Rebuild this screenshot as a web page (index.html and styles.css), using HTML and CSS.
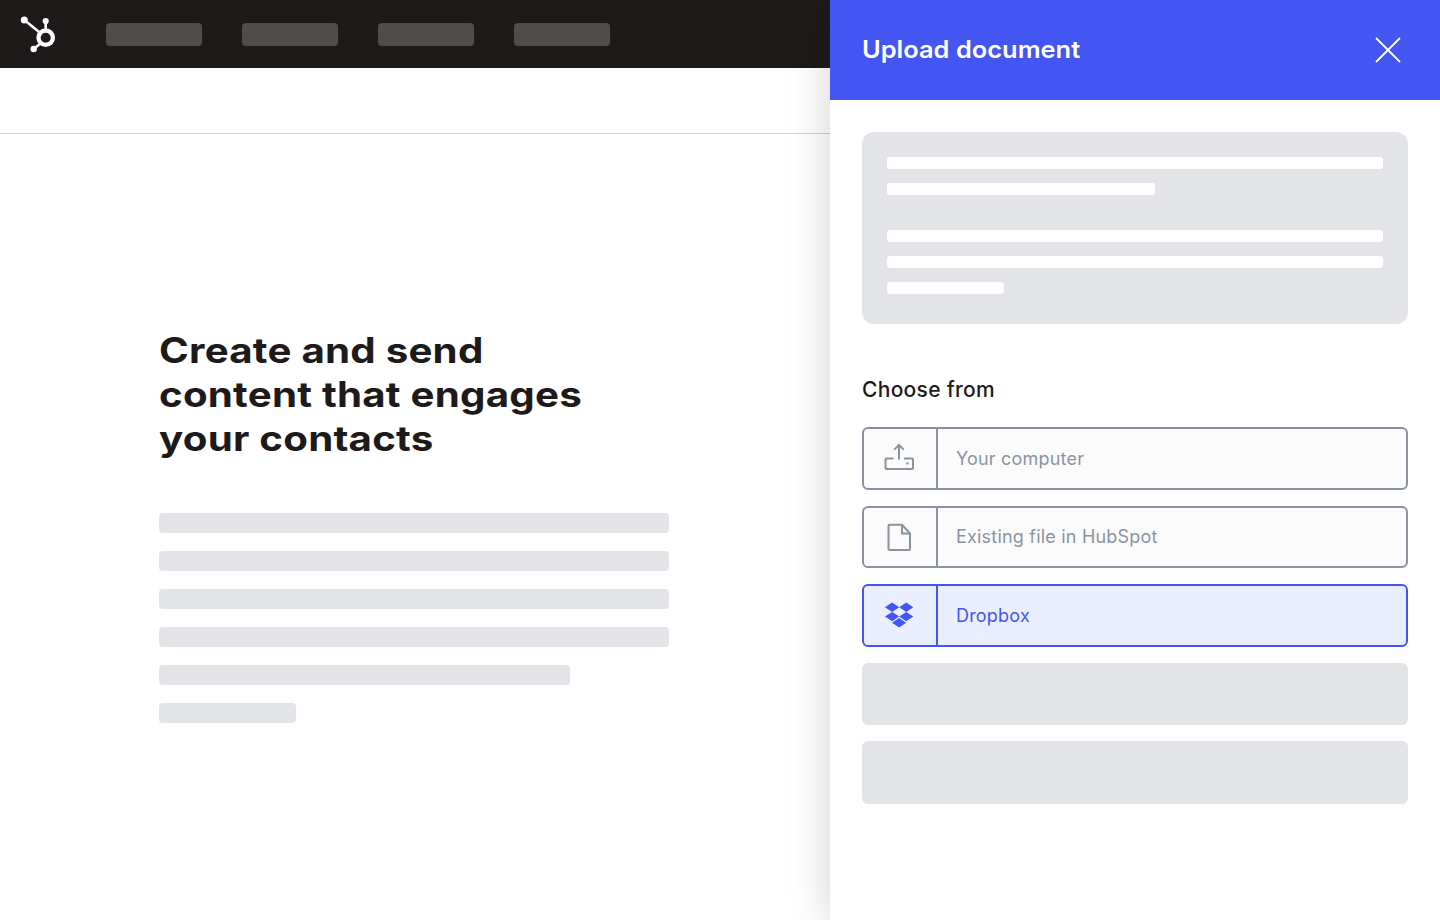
FILE: index.html
```html
<!DOCTYPE html>
<html lang="en">
<head>
    <meta charset="UTF-8">
    <meta name="viewport" content="width=device-width, initial-scale=1.0">
    <title>Upload document</title>
    <link rel="stylesheet" href="styles.css">
</head>
<body>
    <div class="app">
        <!-- Page behind the panel -->
        <div class="main">
            <div class="topbar">
                <svg class="logo" width="40" height="40" viewBox="0 0 40 40" fill="none" stroke="#fff">
                    <circle cx="25.7" cy="17.7" r="7.2" stroke-width="4.3"/>
                    <path d="M4.3 0 L21 13.5" stroke-width="2.6"/>
                    <path d="M25.7 1 V11" stroke-width="2.6"/>
                    <path d="M13.7 29 L21 23" stroke-width="2.6"/>
                    <circle cx="4.3" cy="0" r="3.5" fill="#fff" stroke="none"/>
                    <circle cx="25.7" cy="1" r="3.1" fill="#fff" stroke="none"/>
                    <circle cx="13.7" cy="29" r="3.2" fill="#fff" stroke="none"/>
                </svg>
                <div class="nav">
                    <span class="nav-item"></span>
                    <span class="nav-item"></span>
                    <span class="nav-item"></span>
                    <span class="nav-item"></span>
                </div>
            </div>
            <div class="subbar"></div>
            <div class="content">
                <h1>Create and send<br>content that engages<br>your contacts</h1>
                <div class="lines">
                    <div class="line"></div>
                    <div class="line"></div>
                    <div class="line"></div>
                    <div class="line"></div>
                    <div class="line line-md"></div>
                    <div class="line line-sm"></div>
                </div>
            </div>
        </div>

        <!-- Upload panel -->
        <div class="panel">
            <div class="panel-header">
                <h2>Upload document</h2>
                <svg class="close" width="26" height="26" viewBox="0 0 26 26" stroke="#fff" stroke-width="1.8" fill="none">
                    <path d="M1 1 L25 25 M25 1 L1 25"/>
                </svg>
            </div>
            <div class="panel-body">
                <div class="notice">
                    <div class="notice-group">
                        <div class="bar"></div>
                        <div class="bar bar-md"></div>
                    </div>
                    <div class="notice-group">
                        <div class="bar"></div>
                        <div class="bar"></div>
                        <div class="bar bar-sm"></div>
                    </div>
                </div>
                <h3>Choose from</h3>
                <div class="options">
                    <div class="option">
                        <div class="option-icon">
                            <svg width="32" height="32" viewBox="0 0 32 32" fill="none" stroke="#8a94a0" stroke-width="2">
                                <path d="M10.5 16.5 H3.5 Q2.5 16.5 2.5 17.5 V26 Q2.5 27 3.5 27 H29 Q30 27 30 26 V17.5 Q30 16.5 29 16.5 H21"/>
                                <path d="M16 3 V17.5 M11.2 7.6 L16 3 L20.8 7.6"/>
                                <circle cx="24.4" cy="21.4" r="1.2" fill="#8a94a0" stroke="none"/>
                            </svg>
                        </div>
                        <span class="option-label">Your computer</span>
                    </div>
                    <div class="option">
                        <div class="option-icon">
                            <svg width="32" height="32" viewBox="0 0 32 32" fill="none" stroke="#8a94a0" stroke-width="2">
                                <path d="M6.5 3.8 H19 L27 12.5 V28 Q27 29 26 29 H6.5 Q5.5 29 5.5 28 V4.8 Q5.5 3.8 6.5 3.8 Z"/>
                                <path d="M19 3.8 V12.5 H27"/>
                            </svg>
                        </div>
                        <span class="option-label">Existing file in HubSpot</span>
                    </div>
                    <div class="option option-active">
                        <div class="option-icon">
                            <svg width="32" height="32" viewBox="0 0 32 32" fill="#4356f2">
                                <path d="M9.2 3.4 L16.2 8.2 L9.2 12.9 L1.9 8.2 Z"/>
                                <path d="M23.2 3.4 L30.3 8.2 L23.2 12.9 L16.2 8.2 Z"/>
                                <path d="M9.2 12.9 L16.2 17.6 L9.2 22.3 L1.9 17.6 Z"/>
                                <path d="M23.2 12.9 L30.3 17.6 L23.2 22.3 L16.2 17.6 Z"/>
                                <path d="M16.1 19 L23.2 23.8 L16.1 28.6 L9 23.8 Z"/>
                            </svg>
                        </div>
                        <span class="option-label">Dropbox</span>
                    </div>
                    <div class="option-empty"></div>
                    <div class="option-empty"></div>
                </div>
            </div>
        </div>
    </div>
</body>
</html>
```

FILE: styles.css
```css
* {
    box-sizing: border-box;
}
html, body {
    margin: 0;
    height: 100%;
}
body {
    font-family: 'Inter', 'Liberation Sans', sans-serif;
    background: #fff;
    overflow: hidden;
}
.app {
    display: flex;
    height: 920px;
}
.main {
    flex: 1;
    min-width: 0;
}
.topbar {
    height: 68px;
    background: #1e1a19;
    display: flex;
    align-items: center;
    padding-left: 20px;
}
.logo {
    overflow: visible;
    flex: none;
    margin-top: 12px;
}
.nav {
    display: flex;
    gap: 40px;
    margin-left: 46px;
}
.nav-item {
    width: 96px;
    height: 23px;
    background: #4f4c4b;
    border-radius: 4px;
}
.subbar {
    height: 66px;
    border-bottom: 1px solid #cfd0d2;
}
.content {
    padding: 194px 0 0 159px;
}
/* heading face is an extended grotesque, Inter stretched to its width */
h1 {
    margin: 0;
    font-size: 35px;
    line-height: 44px;
    font-weight: 700;
    letter-spacing: 0.2px;
    color: #1e1a19;
    transform: scaleX(1.15);
    transform-origin: left center;
}
.lines {
    display: flex;
    flex-direction: column;
    gap: 18px;
    margin-top: 53px;
}
.line {
    width: 510px;
    height: 20px;
    background: #e2e4e8;
    border-radius: 4px;
}
.line-md {
    width: 411px;
}
.line-sm {
    width: 137px;
}
.panel {
    width: 610px;
    flex: none;
    background: #fff;
    box-shadow: 0 0 40px rgba(0, 0, 0, 0.18);
    position: relative;
}
.panel-header {
    height: 100px;
    background: #4356f2;
    display: flex;
    align-items: center;
    justify-content: space-between;
    padding: 0 39px 0 32px;
}
h2 {
    margin: 0 0 2px;
    font-size: 24px;
    font-weight: 600;
    color: #fff;
    transform: scaleX(1.06);
    transform-origin: left center;
}
.panel-body {
    padding: 32px;
}
.notice {
    height: 192px;
    background: #e2e4e8;
    border-radius: 12px;
    padding: 25px;
    display: flex;
    flex-direction: column;
    gap: 35px;
}
.notice-group {
    display: flex;
    flex-direction: column;
    gap: 14px;
}
.bar {
    height: 12px;
    background: #fff;
    border-radius: 3px;
}
.bar-md {
    width: 268px;
}
.bar-sm {
    width: 117px;
}
h3 {
    margin: 54px 0 0;
    font-size: 21px;
    line-height: 24px;
    font-weight: 500;
    letter-spacing: 0.3px;
    color: #1e1a19;
}
.options {
    display: flex;
    flex-direction: column;
    gap: 16px;
    margin-top: 25px;
}
.option {
    height: 62.5px;
    display: flex;
    align-items: center;
    background: #fbfbfc;
    border: 2px solid #8a94a0;
    border-radius: 6px;
    color: #8a94a0;
}
.option-icon {
    width: 74px;
    height: 100%;
    flex: none;
    display: flex;
    align-items: center;
    justify-content: center;
    border-right: 2px solid #8a94a0;
    padding-right: 2px;
}
.option-label {
    padding-left: 18px;
    font-size: 18px;
    letter-spacing: 0.2px;
}
.option-active {
    background: #e9effe;
    border-color: #4356f2;
    color: #4356f2;
}
.option-active .option-icon {
    border-right-color: #4356f2;
}
.option-empty {
    height: 62.5px;
    background: #e2e4e8;
    border-radius: 6px;
}
```
